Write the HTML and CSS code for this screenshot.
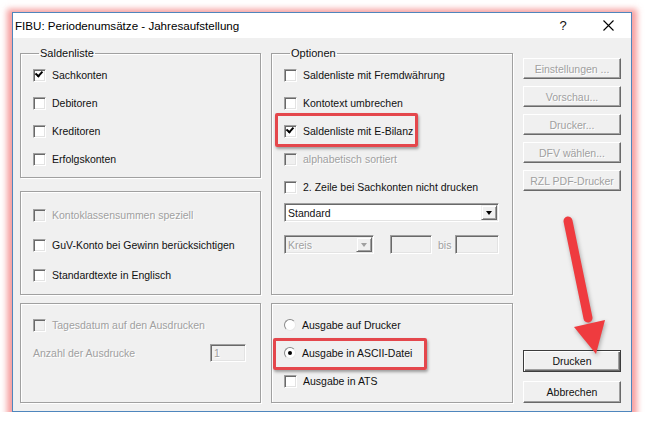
FILE: index.html
```html
<!DOCTYPE html>
<html lang="de">
<head>
    <meta charset="UTF-8">
    <title>FIBU: Periodenumsätze - Jahresaufstellung</title>
    <link rel="stylesheet" href="styles.css">
</head>
<body>
    <div class="window">
        <div class="titlebar">
            <span class="title">FIBU: Periodenumsätze - Jahresaufstellung</span>
            <span class="help">?</span>
            <span class="close">
                <svg width="11" height="11" viewBox="0 0 11 11"><path d="M0.5 0.5 L10.5 10.5 M10.5 0.5 L0.5 10.5" stroke="#000" stroke-width="1.1" fill="none"/></svg>
            </span>
        </div>

        <div class="dialog">
            <div class="col-left">
                <fieldset class="group salden">
                    <legend>Saldenliste</legend>
                    <label class="row"><span class="check on"></span>Sachkonten</label>
                    <label class="row"><span class="check"></span>Debitoren</label>
                    <label class="row"><span class="check"></span>Kreditoren</label>
                    <label class="row"><span class="check"></span>Erfolgskonten</label>
                </fieldset>
                <div class="group extra">
                    <label class="row off"><span class="check"></span>Kontoklassensummen speziell</label>
                    <label class="row"><span class="check"></span>GuV-Konto bei Gewinn berücksichtigen</label>
                    <label class="row"><span class="check"></span>Standardtexte in Englisch</label>
                </div>
            </div>

            <fieldset class="group options">
                <legend>Optionen</legend>
                <label class="row"><span class="check"></span>Saldenliste mit Fremdwährung</label>
                <label class="row"><span class="check"></span>Kontotext umbrechen</label>
                <label class="row"><span class="check on"></span>Saldenliste mit E-Bilanz<span class="callout bilanz"></span></label>
                <label class="row off"><span class="check"></span>alphabetisch sortiert</label>
                <label class="row"><span class="check"></span>2. Zeile bei Sachkonten nicht drucken</label>
                <div class="combo wide"><span class="combo-text">Standard</span><span class="drop"></span></div>
                <div class="range">
                    <div class="combo small off"><span class="combo-text">Kreis</span><span class="drop"></span></div>
                    <span class="field from"></span>
                    <span class="bis">bis</span>
                    <span class="field to"></span>
                </div>
            </fieldset>

            <div class="buttons">
                <button class="btn" disabled>Einstellungen ...</button>
                <button class="btn" disabled>Vorschau...</button>
                <button class="btn" disabled>Drucker...</button>
                <button class="btn" disabled>DFV wählen...</button>
                <button class="btn" disabled>RZL PDF-Drucker</button>
                <button class="btn default">Drucken</button>
                <button class="btn">Abbrechen</button>
            </div>

            <div class="group print">
                <label class="row off"><span class="check"></span>Tagesdatum auf den Ausdrucken</label>
                <div class="row off">
                    <span class="count-label">Anzahl der Ausdrucke</span>
                    <span class="field count">1</span>
                </div>
            </div>

            <div class="group output">
                <label class="row"><span class="radio"></span>Ausgabe auf Drucker</label>
                <label class="row"><span class="radio on"></span>Ausgabe in ASCII-Datei<span class="callout ascii"></span></label>
                <label class="row"><span class="check"></span>Ausgabe in ATS</label>
            </div>
        </div>

        <svg class="arrow" width="50" height="150" viewBox="555 210 50 150">
            <line x1="568" y1="221" x2="588" y2="318" stroke="#ef3b3f" stroke-width="9" stroke-linecap="round"/>
            <polygon points="596,354 574,327 605,320" fill="#ef3b3f"/>
        </svg>
    </div>
</body>
</html>
```

FILE: styles.css
```css
html {
    background: #fff;
}
body {
    margin: 0;
    padding: 12px 0 0 12px;
    font-family: "Liberation Sans", Arial, sans-serif;
    font-size: 10.5px;
    color: #111;
}
.window {
    position: relative;
    width: 620px;
    box-sizing: border-box;
    border: 1px solid #4f86bd;
    background: #f0f0f0;
    box-shadow: 0 2px 6px 5px rgba(240, 95, 95, 0.6);
}
.titlebar {
    display: flex;
    align-items: center;
    height: 25px;
    background: #fff;
    padding-left: 2px;
}
.title {
    font-size: 11.6px;
    color: #000;
    flex: 1;
}
.help {
    font-size: 13px;
    width: 44px;
    text-align: center;
}
.close {
    width: 46px;
    display: flex;
    justify-content: center;
}

.dialog {
    display: grid;
    grid-template-columns: 241px 242px 98px;
    grid-template-rows: 248px 100px;
    column-gap: 10px;
    row-gap: 8px;
    padding: 9px 10px 8px 7px;
}
.col-left {
    display: flex;
    flex-direction: column;
    justify-content: space-between;
}
.group {
    margin: 0;
    min-width: 0;
    box-sizing: border-box;
    border: 1px solid #a0a0a0;
    box-shadow: 1px 1px 0 #fff, inset 1px 1px 0 #fff;
    padding: 0 0 0 12px;
}
legend {
    line-height: 13px;
    font-size: 11px;
    padding: 0 1px;
    margin-left: 6px;
}
.salden {
    height: 131px;
    padding-top: 1px;
}
.extra {
    height: 104px;
    padding-top: 8px;
}
.extra .row {
    height: 30px;
}
.options {
    padding-top: 1px;
    padding-right: 12px;
}
.print, .output {
    padding-top: 7px;
}

.row {
    position: relative;
    display: flex;
    align-items: center;
    height: 28px;
    white-space: nowrap;
}
.row.off {
    color: #a0a0a0;
    text-shadow: 1px 1px 0 #fff;
}
.check {
    position: relative;
    width: 13px;
    height: 13px;
    box-sizing: border-box;
    border: 1px solid;
    border-color: #a0a0a0 #fff #fff #a0a0a0;
    box-shadow: inset 1px 1px 0 #696969, inset -1px -1px 0 #e3e3e3;
    background: #fff;
    margin-right: 6px;
    flex: none;
}
.off .check {
    background: #f0f0f0;
}
.check.on::after {
    content: "";
    position: absolute;
    left: 2px;
    top: 1px;
    width: 5px;
    height: 3px;
    border-left: 2px solid #000;
    border-bottom: 2px solid #000;
    transform: rotate(-48deg);
    transform-origin: 3px 3px;
}
.radio {
    position: relative;
    width: 12px;
    height: 12px;
    box-sizing: border-box;
    border-radius: 50%;
    border: 1px solid;
    border-color: #8a8a8a #e8e8e8 #e8e8e8 #8a8a8a;
    background: #fff;
    margin-right: 6px;
    flex: none;
}
.radio.on::after {
    content: "";
    position: absolute;
    left: 3px;
    top: 3px;
    width: 4px;
    height: 4px;
    border-radius: 50%;
    background: #000;
}

.callout {
    position: absolute;
    top: -4px;
    box-sizing: border-box;
    border: 3px solid #e4474c;
    border-radius: 2px;
    box-shadow: 1px 2px 3px rgba(0, 0, 0, 0.35);
    pointer-events: none;
}
.bilanz {
    left: -9px;
    width: 143px;
    height: 34px;
}
.ascii {
    left: -11px;
    top: -1px;
    width: 154px;
    height: 32px;
}

.combo {
    position: relative;
    display: flex;
    align-items: center;
    box-sizing: border-box;
    height: 19px;
    border: 1px solid;
    border-color: #a0a0a0 #fff #fff #a0a0a0;
    box-shadow: inset 1px 1px 0 #696969, inset -1px -1px 0 #e3e3e3;
    background: #fff;
    padding-left: 3px;
}
.combo.wide {
    margin-top: 2px;
    width: 215px;
}
.combo.small {
    width: 90px;
    background: #f0f0f0;
}
.combo.off .combo-text {
    color: #a0a0a0;
    text-shadow: 1px 1px 0 #fff;
}
.drop {
    position: absolute;
    right: 1px;
    top: 1px;
    width: 16px;
    height: 15px;
    box-sizing: border-box;
    background: #f0f0f0;
    border: 1px solid;
    border-color: #f0f0f0 #696969 #696969 #f0f0f0;
    box-shadow: inset 1px 1px 0 #fff, inset -1px -1px 0 #a0a0a0;
}
.drop::after {
    content: "";
    position: absolute;
    left: 4px;
    top: 5px;
    border-left: 3.5px solid transparent;
    border-right: 3.5px solid transparent;
    border-top: 4px solid #000;
}
.off .drop::after {
    border-top-color: #a0a0a0;
}
.range {
    display: flex;
    align-items: center;
    margin-top: 13px;
}
.field {
    display: block;
    height: 19px;
    box-sizing: border-box;
    border: 1px solid;
    border-color: #a0a0a0 #fff #fff #a0a0a0;
    box-shadow: inset 1px 1px 0 #696969, inset -1px -1px 0 #e3e3e3;
    background: #f0f0f0;
}
.field.from {
    width: 42px;
    margin-left: 16px;
}
.bis {
    color: #a0a0a0;
    text-shadow: 1px 1px 0 #fff;
    margin: 0 4px 0 6px;
}
.field.to {
    width: 44px;
}
.count-label {
    width: 177px;
}
.field.count {
    width: 36px;
    height: 18px;
    line-height: 16px;
    padding-left: 3px;
    color: #a0a0a0;
}

.buttons {
    grid-column: 3;
    grid-row: 1 / 3;
    display: flex;
    flex-direction: column;
    gap: 7px;
    padding-top: 11px;
}
.btn {
    height: 21px;
    padding: 0;
    font-family: inherit;
    font-size: 10.5px;
    color: #111;
    background: #f0f0f0;
    border: 1px solid;
    border-color: #fff #696969 #696969 #fff;
    box-shadow: inset -1px -1px 0 #a0a0a0;
}
.btn:disabled {
    color: #a0a0a0;
    text-shadow: 1px 1px 0 #fff;
}
.btn.default {
    margin-top: auto;
    height: 22px;
    border: 1px solid #3c3c3c;
    box-shadow: inset 1px 1px 0 #fff, inset -1px -1px 0 #696969, inset -2px -2px 0 #a0a0a0;
}
.btn.default + .btn {
    margin-top: 2px;
    height: 22px;
}

.arrow {
    position: absolute;
    left: 542px;
    top: 197px;
    pointer-events: none;
    overflow: visible;
    filter: drop-shadow(1px 2px 2px rgba(0, 0, 0, 0.3));
}
```
